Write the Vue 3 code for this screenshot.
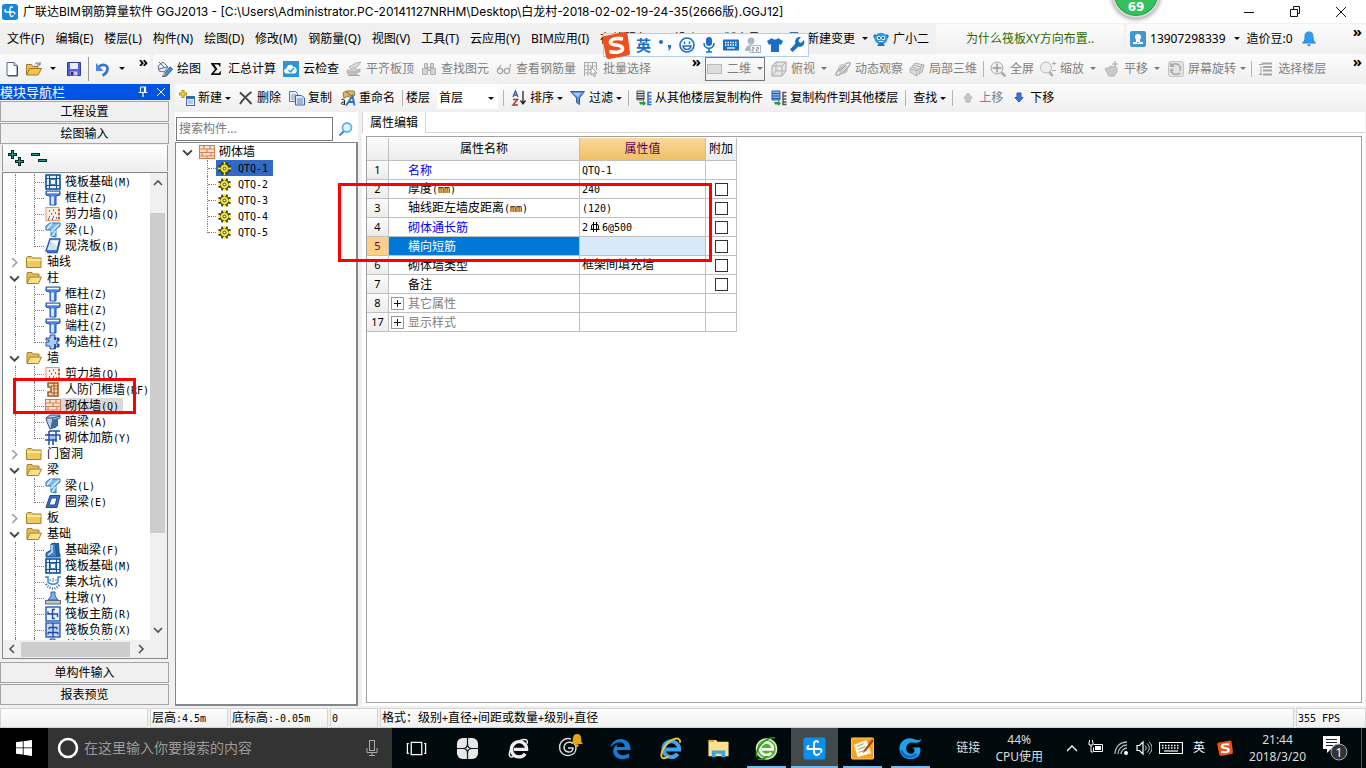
<script setup>
import { h, ref } from 'vue'

// Splits a label so that its Latin part is set in the monospaced face.
const Txt = (p) =>
  h('span', { class: 'txt' }, p.s.split(/([ -~]+)/).filter(Boolean)
    .map((x) => (/^[ -~]/.test(x) ? h('span', { class: 'mono' }, x) : x)))
Txt.props = ['s']

const icons = {
  page: '<path d="M3 1.500h7l3 3v10H3z" fill="#fff" stroke="#5a6a86"/><path d="M10 1.500v3h3" fill="#cfdcf2" stroke="#5a6a86"/><path d="M13.500 5v10H4" fill="none" stroke="#2d466e"/>',
  open: '<path d="M0.500 14V3.500h5l1.500 2h5v3" fill="#e9c14f" stroke="#9a7a2a"/><path d="M0.500 14l3.500-6.500h11.500L12 14z" fill="#f8c24f" stroke="#9a7a2a"/><path d="M9 3.500c1-2 3-2 4.500-.5M14 1v3h-3" fill="none" stroke="#4a6aa8"/>',
  save: '<path d="M1.500 1.500h13v13h-13z" fill="#5560d8" stroke="#343a9a"/><path d="M4 2h8v6H4z" fill="#e8ecfa"/><path d="M4.500 10.500h7v4h-7z" fill="#c9cbe8"/><path d="M5 11h2.500v3.500H5z" fill="#2b2f80"/>',
  undo: '<path d="M4 5.500c4-3 9-1.500 8.500 2.500-.3 3-2 5-5 6.500" fill="none" stroke="#3b6fd0" stroke-width="2.600"/><path d="M1 2v8h7.500z" fill="#4c86e6"/>',
  draw: '<path d="M1 5l5-4 5 5-4 5-5-1z" fill="#eef3fb" stroke="#5a6f96"/><path d="M2 1l6 6M2 8l8-2" stroke="#4f6790" fill="none"/><path d="M7 13l6-7 2.500 2-6 7-4 .5z" fill="#4f8fd8" stroke="#29508c"/><path d="M7 12l2 2-4 1z" fill="#e6b54a"/>',
  sigma: '<path d="M3 2h9.500v3.500h-1.200C11 4 10.500 3.500 9 3.500H6.200L9.500 8l-3.800 4.300h3.800c1.500 0 2.200-.5 2.700-2h1L12.500 14H3v-1l4-4.800L3 3z" fill="#111"/>',
  cloud: '<rect width="16" height="16" fill="#2a95dc"/><path d="M4 12.500c-4 0-3.500-5-.5-5C4 3 9 2.500 10.500 6c4-.5 4.500 6.500.5 6.500z" fill="#fff"/><path d="M5.500 9l2 2 3.500-4" fill="none" stroke="#2a95dc" stroke-width="1.500"/>',
  slab: '<path d="M3 6l7-4 5-1-3 4-7 3zM1 9h6l3-2v4H1z" fill="#dcdcdc" stroke="#b4b4b4"/><path d="M1 11h13V8l-3 1v5H3z" fill="#c4c4c4" stroke="#b0b0b0"/><path d="M2 14.500h12" stroke="#aaa"/>',
  binoc: '<path d="M3.500 2.500h3v4h-3zM9.500 2.500h3v4h-3zM1.500 7.500h5v6h-5zM9.500 7.500h5v6h-5zM6.500 6.500h3v3h-3z" fill="#d4d4d4" stroke="#b0b0b0"/>',
  glasses: '<circle cx="4" cy="10" r="2.600" fill="none" stroke="#a5a5a5" stroke-width="1.300"/><circle cx="11" cy="10" r="2.600" fill="none" stroke="#a5a5a5" stroke-width="1.300"/><path d="M1.500 9L5 4M6.500 10h2M13.500 9l1-6" stroke="#a5a5a5" stroke-width="1.200" fill="none"/>',
  batch: '<path d="M1 1.500h13M1 5h13M1 8.500h7M1 12h7M1.500 1v14M5 1v14M9.500 1v6M13.500 1v8" stroke="#aaa" fill="none"/><path d="M8 6l6 6-3 0 1.500 3-1.500.500-1.200-3L8 14z" fill="#fff" stroke="#999"/>',
  flat: '<rect x=".5" y="3.500" width="14" height="9" fill="#ddd" stroke="#bababa"/>',
  cube: '<path d="M1 5l4-4h10v9l-4 5H1z" fill="#e6e6e6" stroke="#a6a6a6"/><path d="M1 5h10v10M11 5l4-4M5 1v9h10M5 10l-4 5" fill="none" stroke="#b0b0b0"/>',
  orbit: '<circle cx="8" cy="8" r="5" fill="#c4c4c4"/><path d="M1 14c-1-3 11-14 14-12 1 3-11 14-14 12z" fill="none" stroke="#a8a8a8" stroke-width="1.400"/><path d="M4 7l6-4M6 12l6-6" stroke="#eee"/>',
  local3d: '<path d="M1 8l5-6 9 2-2 7-6 4-6-4z" fill="#dedede" stroke="#b0b0b0"/><path d="M1 8l7 2 6-6M8 10l-1 5M5 4l7 2-2 7M3 6l7 3" fill="none" stroke="#b2b2b2"/>',
  full: '<circle cx="7" cy="7" r="6" fill="#eee" stroke="#a8a8a8"/><path d="M7 2.500v9M2.500 7h9" stroke="#9a9a9a" stroke-width="1.500"/><path d="M11.500 11.500l4 4" stroke="#aaa" stroke-width="2.500"/>',
  zoom: '<circle cx="6" cy="6.500" r="5.500" fill="#eee" stroke="#b5b5b5"/><path d="M9.500 11l3 4" stroke="#aaa" stroke-width="2.500"/><path d="M12 2.500h4M14 .5v4M12 9.500h4" stroke="#aaa"/>',
  pan: '<path d="M1 8c1-2 3-1 4 0V6l2-1 2 1 2-1 2 2v4l-3 4H5z" fill="#cacaca" stroke="#b6b6b6"/><path d="M11 0v6M8 3h6" stroke="#a2a2a2"/>',
  rotate: '<rect x=".5" y=".5" width="15" height="15" rx="2" fill="#e3e3e3" stroke="#c4c4c4"/><path d="M4 4c5-3 10 1 8 6M12 12c-4 3-9 1-9-3" fill="none" stroke="#aaa" stroke-width="1.600"/><path d="M2 1v5h5zM1 10h5l-2-3z" fill="#aaa"/>',
  floors: '<path d="M5 2.500h9M5 6h9M5 9.500h9M5 13.500h9" stroke="#a3a3a3" stroke-width="1.800"/><path d="M1 3.500h4L3.500 1M3 5v9M1 13.500h3" stroke="#a3a3a3" fill="none"/>',
  create: '<path d="M4 0v8M0 4h8" stroke="#b49300" stroke-width="3"/><path d="M4 1v6M1 4h6" stroke="#ffe45c"/><rect x="7.500" y="6.500" width="8" height="9" fill="#eef4ff" stroke="#3b68b8"/><path d="M8 8h7" stroke="#3b68b8" stroke-width="2"/><path d="M9 11h5M9 13h5" stroke="#7d9fd8"/>',
  del: '<path d="M2 2.500C6 6 10 10 13.500 14M13.500 2C9 5 5 9.500 2 14" fill="none" stroke="#444" stroke-width="1.900"/>',
  copy: '<path d="M.5 1.500h6l2 2v8h-8z" fill="#e9f0fc" stroke="#5075b8"/><path d="M2 5h5M2 7h5M2 9h5" stroke="#7898cc"/><path d="M6.500 5.500h6l3 2.500v7h-9z" fill="#dfe9fa" stroke="#3b60a8"/><path d="M8 9h6M8 11h6M8 13h6" stroke="#5a7fc4"/>',
  rename: '<path d="M3 3l3-2h8l1 4-4 3-3-2-4 2z" fill="#d9bd63" stroke="#8f7630"/><path d="M6 2l6 4" stroke="#b43"/><path d="M1.500 9.500c2-1 3 0 3 1.500v4M4.500 12c-4-.5-4.500 3.500 0 2" fill="none" stroke="#222"/><path d="M6 15.500L12.500 6l2 9.500M8.500 12h5" fill="none" stroke="#2f6fd0" stroke-width="1.900"/>',
  sort: '<path d="M2 7l2.500-6L7 7M3 5h3" fill="none" stroke="#3a56a8" stroke-width="1.300"/><path d="M2 9.500h4.500L2 15h5" fill="none" stroke="#a33b3b" stroke-width="1.500"/><path d="M12 1v12M9.500 10.500L12 14l2.500-3.500" stroke="#222" fill="none" stroke-width="1.300"/>',
  filter: '<path d="M.5 1.500h14L9.500 8v6.500l-3-2V8z" fill="#5d92e2" stroke="#2f5db0"/><path d="M3 3h8L8 7z" fill="#a9caf6"/>',
  fromfloor: '<path d="M1 1h7v9H1z" fill="#ddd" stroke="#555"/><path d="M1 3.500h7M1 6h7M1 8.500h7" stroke="#333"/><path d="M3 12h4v-2l3 3.500L7 16v-1.500H4z" fill="#2a9b3c"/><path d="M15.500 2.500H12v12h3.500M12 6h3.500M12 9h3.500M12 12h3.500" stroke="#2f6fc8" stroke-width="1.500" fill="none"/>',
  tofloor: '<path d="M1 1h8v9H1z" fill="#8db5ec" stroke="#2c5cae"/><path d="M1 3.500h8M1 6h8M1 8.500h8" stroke="#2354a8"/><path d="M3 12h4v-2l3 3.500L7 16v-1.500H4z" fill="#2a9b3c"/><path d="M15.500 2.500H12v12h3.500M12 6h3.500M12 9h3.500M12 12h3.500" stroke="#555" stroke-width="1.500" fill="none"/>',
  up: '<path d="M8 3l4 5h-2v4H6V8H4z" fill="#c8c8c8" stroke="#b0b0b0"/>',
  down: '<path d="M8 12L4 7.500h2V3h4v4.500h2z" fill="#3f74de" stroke="#2450b4"/>',
  doc: '<path d="M2 1.500h8l3 3v10H2z" fill="#fff" stroke="#3178b8"/><path d="M9 2v4h4" fill="none" stroke="#3178b8"/>',
  robot: '<path d="M0 5l2-2 2 2-2 3zM16 5l-2-2-2 2 2 3z" fill="#1d74c0"/><ellipse cx="8" cy="7.500" rx="6.500" ry="5.800" fill="#2f9ae8"/><path d="M4 15l2-3h4l2 3z" fill="#1d74c0"/><circle cx="5.800" cy="7" r="2" fill="#fff"/><circle cx="10.200" cy="7" r="2" fill="#fff"/><circle cx="6" cy="7" r="1" fill="#135"/><circle cx="10" cy="7" r="1" fill="#135"/><path d="M6 10.500h4" stroke="#fff"/>',
  user: '<rect width="16" height="16" rx="2" fill="#4298cc"/><circle cx="8" cy="6" r="3" fill="#fff"/><path d="M3 13v-2h10v2z" fill="#fff"/><path d="M6 8h4v3H6z" fill="#fff"/><path d="M7 11.500h2" stroke="#4298cc"/>',
  bell: '<path d="M8 1c4 0 4 3 4 6 0 3 1 3.500 2.500 5h-13C3 10.500 4 10 4 7c0-3 0-6 4-6z" fill="#2f9bf5" stroke="#1f86e0"/><path d="M6 13.500h4L8 15.500z" fill="#1570c4"/>',
  // tree icons
  raft: '<rect x="1" y="1" width="14" height="14" fill="#e8f2fd" stroke="#174f96" stroke-width="1.600"/><path d="M4.500 1v14M11.500 1v14M1 4.500h14M1 11.500h14" stroke="#174f96"/><rect x="5.500" y="5.500" width="5" height="5" fill="#fff" stroke="#3d7fc8"/>',
  column: '<path d="M1 1h14v4l-4 1v9H5V6L1 5z" fill="#4c86e4" stroke="#2550a8"/><path d="M2 2.500h12" stroke="#fff" stroke-width="1.500"/><path d="M7.500 6.500v8" stroke="#d6e6ff" stroke-width="3"/>',
  shear: '<rect x="1" y="1.500" width="13" height="13" fill="#f7eee8" stroke="#e09a72"/><path d="M4 5h1M8 4h1M6 8h1M10 7h1M4 11h1M8 11h1M11 12h1M3 13h1M7 13h1" stroke="#555" stroke-width="1.300"/><path d="M14 3v11" stroke="#c05a20" stroke-width="2" stroke-dasharray="2 2"/>',
  beam: '<path d="M1 4l4-3h10v3l-4 3v8l-5-1V8H1z" fill="#7cbcf0" stroke="#2a77c0"/><path d="M2 7l5-6M6 10l8-8M7 14l4-5" stroke="#e4f4ff" stroke-width="1.200"/>',
  castslab: '<path d="M5 1h10l-3 12H1z" fill="#cfe1f8" stroke="#2356ac" stroke-width="1.400"/><path d="M2 14.500h10L15 3" fill="none" stroke="#2356ac" stroke-width="1.400"/><path d="M6 3h7l-1 5z" fill="#fff"/>',
  ring: '<path d="M5 1.500h10l-3 12H1z" fill="#3c70c8" stroke="#1d4594"/><path d="M6.500 4H12l-2 7H4z" fill="#fff" stroke="#1d4594"/>',
  struct: '<path d="M5 1h5v3h4v3h-2v3h2v3h-4v2H5v-3H1V8h3V6H1V4h4z" fill="#a9cdf6" stroke="#1f50a0"/><path d="M10 3v3M13 4v3M10 10v5M13 10v3" stroke="#1f4a96" stroke-width="1.800"/>',
  frame: '<path d="M3 1h10v13H3v-4h3V5H3z" fill="#f7d9bb" stroke="#a85618" stroke-width="1.500"/><path d="M6 4h7M8 7h5M6 11h7M9 1v13" stroke="#a85618"/>',
  brick: '<rect x=".5" y="1.500" width="15" height="13" fill="#f9e2d2" stroke="#cc7c4e"/><path d="M1 5h14M1 8.500h14M1 12h14M5 2v3M11 2v3M8 5v3M3 8.500V12M12 8.500V12M8 12v3" stroke="#d58458" stroke-width="1.200"/>',
  hidden: '<path d="M1 4l4-3h10v3l-4 2v7l-6 2-3-7z" fill="#b9cfe6" stroke="#27507c"/><path d="M1 4h7l7-2M8 4l-2 11" fill="none" stroke="#27507c"/><path d="M7 6l6-2v8l-6 2z" fill="#3a6ba4"/>',
  rebar: '<path d="M4 1h11M4 1v14M0 5h15M11 1v11M0 10h12M8 5v10M15 5v5" stroke="#2049b4" stroke-width="1.500" fill="none"/><path d="M5 6h5v3H5z" fill="#9cc7f4"/>',
  fbeam: '<path d="M1 15v-4l5-3V2l4-1 1 8 4 3v3z" fill="#3f84c8" stroke="#174b86"/><path d="M10 1h4l1 14h-4z" fill="#1f5ea4"/><path d="M3 13l4-3V3" stroke="#c9e6ff" stroke-width="1.500" fill="none"/>',
  pit: '<path d="M0 3h3v5c2 3 8 3 10 0V3h3" fill="none" stroke="#3f84cc" stroke-width="1.500"/><path d="M1 10c4 6 10 6 14 0" fill="none" stroke="#2d66ae" stroke-width="2.500" stroke-dasharray="1 1.500"/><path d="M5 5v2M8 4v4M11 5v2" stroke="#3f84cc"/>',
  pier: '<path d="M6 2h4v4l3 4H3l3-4z" fill="#7fb0ec" stroke="#2a5ca8"/><rect x=".5" y="10.500" width="15" height="3.500" fill="#bcc7d0" stroke="#5c6c7c"/>',
  main: '<rect x="1" y="1" width="14" height="14" fill="#eaf3ff" stroke="#2558b4" stroke-width="1.400"/><path d="M10 3.500H7.500v9H10M3 5.500V8h9.500v3" stroke="#1c47a4" stroke-width="1.400" fill="none"/>',
  neg: '<rect x="1" y="1" width="14" height="14" fill="#c4dcf8" stroke="#2558b4" stroke-width="1.400"/><path d="M8 1v14M4 5.500h8M4 5.500v2M12 5.500v2M3 10.500h10M3 10.500v2M13 10.500v2" stroke="#1c47a4" stroke-width="1.300" fill="none"/>',
  folder: '<path d="M.5 13.500v-10l1-1h4l1.500 1.500h8v9.500z" fill="#f0c95c" stroke="#a3822e"/><path d="M1 6h14" stroke="#fff1bd" stroke-width="1.500"/>',
  folderopen: '<path d="M1 13V3l1-.5h4L7.500 4H13v4" fill="#e6bd4c" stroke="#a3822e"/><path d="M1 13.500L4 7h11.500l-3 6.500z" fill="#fbe08c" stroke="#a3822e"/>',
  gear: '<path d="M5.500 1.500v13M10.500 1.500v13M1.500 5.500h13M1.500 10.500h13" stroke="#333" stroke-width="2"/><circle cx="8" cy="8" r="4.500" fill="#f6ea2c" stroke="#4c4800"/><path d="M8 1v3M8 12v3M1 8h3M12 8h3" stroke="#f6ea2c" stroke-width="1.400"/><circle cx="8" cy="8" r="1.500" fill="#fff" stroke="#333"/>',
}

const menus = ['文件(F)', '编辑(E)', '楼层(L)', '构件(N)', '绘图(D)', '修改(M)', '钢筋量(Q)', '视图(V)', '工具(T)', '云应用(Y)', 'BIM应用(I)', '在线服务(S)', '帮助(H)', '版本号(B)']

const mainTools = [
  { i: 'draw', t: '绘图' }, { i: 'sigma', t: '汇总计算' }, { i: 'cloud', t: '云检查' },
  { i: 'slab', t: '平齐板顶', off: 1 }, { i: 'binoc', t: '查找图元', off: 1 },
  { i: 'glasses', t: '查看钢筋量', off: 1 }, { i: 'batch', t: '批量选择', off: 1 },
]
const viewTools = [
  { i: 'cube', t: '俯视', off: 1, arrow: 1 }, { i: 'orbit', t: '动态观察', off: 1 },
  { i: 'local3d', t: '局部三维', off: 1 }, { sep: 1 },
  { i: 'full', t: '全屏', off: 1 }, { i: 'zoom', t: '缩放', off: 1, arrow: 1 },
  { i: 'pan', t: '平移', off: 1, arrow: 1 }, { i: 'rotate', t: '屏幕旋转', off: 1, arrow: 1, tight: 1 },
  { sep: 1 }, { i: 'floors', t: '选择楼层', off: 1 },
]
const partTools = [
  { i: 'create', t: '新建', arrow: 1, tight: 1 }, { i: 'del', t: '删除' },
  { i: 'copy', t: '复制' }, { i: 'rename', t: '重命名' }, { sep: 1 },
]
const partTools2 = [
  { sep: 1 }, { i: 'sort', t: '排序', arrow: 1, tight: 1 }, { i: 'filter', t: '过滤', arrow: 1, tight: 1 },
  { sep: 1 }, { i: 'fromfloor', t: '从其他楼层复制构件' }, { i: 'tofloor', t: '复制构件到其他楼层' },
  { sep: 1 }, { t: '查找', arrow: 1, tight: 1 }, { sep: 1 },
  { i: 'up', t: '上移', off: 1 }, { i: 'down', t: '下移' },
]

const tree = [
  ['raft', '筏板基础(M)'], ['column', '框柱(Z)'], ['shear', '剪力墙(Q)'], ['beam', '梁(L)'], ['castslab', '现浇板(B)', 'last'],
  ['folder', '轴线'], ['folderopen', '柱'],
  ['column', '框柱(Z)'], ['column', '暗柱(Z)'], ['column', '端柱(Z)'], ['struct', '构造柱(Z)', 'last'],
  ['folderopen', '墙'],
  ['shear', '剪力墙(Q)'], ['frame', '人防门框墙(RF)'], ['brick', '砌体墙(Q)', 'sel'], ['hidden', '暗梁(A)'], ['rebar', '砌体加筋(Y)', 'last'],
  ['folder', '门窗洞'], ['folderopen', '梁'],
  ['beam', '梁(L)'], ['ring', '圈梁(E)', 'last'],
  ['folder', '板'], ['folderopen', '基础'],
  ['fbeam', '基础梁(F)'], ['raft', '筏板基础(M)'], ['pit', '集水坑(K)'], ['pier', '柱墩(Y)'], ['main', '筏板主筋(R)'], ['neg', '筏板负筋(X)'], ['struct', '基础板带(W)'],
].map(([icon, label, state]) => ({ icon, label, state, folder: icon.startsWith('folder') }))

const walls = ['QTQ-1', 'QTQ-2', 'QTQ-3', 'QTQ-4', 'QTQ-5']

const rows = [
  { n: 1, name: '名称', value: 'QTQ-1', blue: 1 },
  { n: 2, name: '厚度(mm)', value: '240', box: 1 },
  { n: 3, name: '轴线距左墙皮距离(mm)', value: '(120)', box: 1 },
  { n: 4, name: '砌体通长筋', steel: ['2', '6@500'], blue: 1, box: 1 },
  { n: 5, name: '横向短筋', value: '', box: 1, sel: 1 },
  { n: 6, name: '砌体墙类型', value: '框架间填充墙', box: 1 },
  { n: 7, name: '备注', value: '', box: 1 },
  { n: 8, name: '其它属性', value: '', group: 1 },
  { n: 17, name: '显示样式', value: '', group: 1 },
]
const floor = ref('首层')
</script>

<template>
  <div class="app">
    <header class="title">
      <svg class="logo" viewBox="0 0 24 24"><rect width="24" height="24" rx="4" fill="#1488dc"/><path d="M16 6c-1-3-4-2-4 1v8c0 4 3 5 5 2M5 12h13M5 12c-1-1-1-3 1-4M18 12c2 1 1 3 0 3" fill="none" stroke="#fff" stroke-width="2"/></svg>
      <h1>广联达BIM钢筋算量软件 GGJ2013 - [C:\Users\Administrator.PC-20141127NRHM\Desktop\白龙村-2018-02-02-19-24-35(2666版).GGJ12]</h1>
      <div class="ball">69</div>
      <button class="win" aria-label="最小化"><svg viewBox="0 0 12 12"><path d="M1 6.500h10" stroke="#111"/></svg></button>
      <button class="win" aria-label="还原"><svg viewBox="0 0 12 12"><path d="M1.500 3.500h7v7h-7zM4.500 3V.5h6v7H9" fill="none" stroke="#111"/></svg></button>
      <button class="win" aria-label="关闭"><svg viewBox="0 0 12 12"><path d="M1 1l10 10M11 1L1 11" stroke="#111"/></svg></button>
    </header>

    <div class="menubar">
      <nav class="menus"><button v-for="m in menus" :key="m">{{ m }}</button></nav>
      <button class="tool change"><svg viewBox="0 0 16 16" v-html="icons.doc"/>新建变更<i class="arrow"/></button>
      <button class="tool helper"><svg viewBox="0 0 16 16" v-html="icons.robot"/>广小二</button>
      <div class="strip tip"><a href="#">为什么筏板XY方向布置..</a></div>
      <div class="strip account">
        <button class="tool"><svg viewBox="0 0 16 16" v-html="icons.user"/><span>13907298339</span><i class="arrow"/></button>
        <button class="tool beans">造价豆:0<svg viewBox="0 0 16 16" v-html="icons.bell"/></button>
        <span class="more">»</span>
      </div>
      <div class="ime">
        <svg class="sogou" viewBox="0 0 28 28"><path d="M2 5L23 1q2 0 2.500 2L28 22q0 2-2 2.500L7 28q-2 0-3-2L.5 8Q0 6 2 5z" fill="#f0501c"/><path d="M21 8C15 6.500 8 8 8.500 11.500c.5 4 12 1 12 6 0 4-7 4.500-13 3" fill="none" stroke="#fff" stroke-width="3.600"/></svg>
        <b>英</b>
        <svg viewBox="0 0 16 16"><circle cx="4" cy="5" r="2" fill="#1a6fc4"/><path d="M11 8h3c.5 3-1 5-3 6 1-2 1-3 0-4z" fill="#1a6fc4"/></svg>
        <svg viewBox="0 0 16 16"><circle cx="8" cy="8" r="7" fill="none" stroke="#1a6fc4" stroke-width="1.600"/><path d="M5.500 4.500v2.500M10.500 4.500v2.500M4 9c1 4.500 7 4.500 8 0z" stroke="#1a6fc4" stroke-width="1.400" fill="none"/></svg>
        <svg viewBox="0 0 16 16"><rect x="5" y="0" width="6" height="9" rx="3" fill="#1a6fc4"/><path d="M3 6c0 7 10 7 10 0M8 11v4M5 15h6" fill="none" stroke="#1a6fc4" stroke-width="1.600"/></svg>
        <svg viewBox="0 0 16 16"><rect x="0" y="2.500" width="16" height="11" rx="1" fill="#1a6fc4"/><path d="M2 5.500h12M2 8h12" stroke="#fff" stroke-width="1.400" stroke-dasharray="1.500 1"/><path d="M4 11h8" stroke="#fff" stroke-width="1.300"/></svg>
        <svg viewBox="0 0 16 16"><circle cx="6" cy="4" r="3.400" fill="#a9b8c8"/><path d="M0 14c0-7 9-8 11-4v4z" fill="#a9b8c8"/><rect x="5" y="8.500" width="10.500" height="7" fill="#fff" stroke="#a9b8c8"/><path d="M7 10.500h2v1.500H7v2h2M11.500 10.500h2v1.500h-2v2h2" fill="none" stroke="#8b9cae"/></svg>
        <svg viewBox="0 0 16 16"><path d="M5 1c1 2 5 2 6 0l5 3-2 4-2-1v8H4V7L2 8 0 4z" fill="#1a6fc4"/></svg>
        <svg viewBox="0 0 16 16"><path d="M15 3l-3 3-2-1-.5-2L12 0C8-1 5 3 6.500 6.500L1 12.500 3.500 15l6-5.500C13 11 16.500 7 15 3z" fill="#1a6fc4"/></svg>
      </div>
    </div>

    <div class="toolrow">
      <div class="strip files">
        <button class="tool" aria-label="新建"><svg viewBox="0 0 16 16" v-html="icons.page"/></button>
        <button class="tool" aria-label="打开"><svg viewBox="0 0 16 16" v-html="icons.open"/><i class="arrow"/></button>
        <button class="tool" aria-label="保存"><svg viewBox="0 0 16 16" v-html="icons.save"/></button>
        <i class="sep dark"/>
        <button class="tool" aria-label="撤销"><svg viewBox="0 0 16 16" v-html="icons.undo"/><i class="arrow"/></button>
        <span class="more">»</span>
      </div>
      <div class="strip draws">
        <button v-for="b in mainTools" :key="b.t" class="tool" :class="{ off: b.off }"><svg viewBox="0 0 16 16" v-html="icons[b.i]"/>{{ b.t }}</button>
        <span class="more">»</span>
      </div>
      <div class="strip views">
        <button class="tool off combo"><svg viewBox="0 0 16 16" v-html="icons.flat"/>二维<i class="arrow"/></button>
        <template v-for="(b, k) in viewTools" :key="k">
          <i v-if="b.sep" class="sep"/>
          <button v-else class="tool" :class="{ off: b.off, tight: b.tight }"><svg viewBox="0 0 16 16" v-html="icons[b.i]"/>{{ b.t }}<i v-if="b.arrow" class="arrow"/></button>
        </template>
        <span class="more">»</span>
      </div>
    </div>

    <main class="body">
      <aside class="nav">
        <div class="navhead"><span>模块导航栏</span>
          <svg viewBox="0 0 12 12"><path d="M3.500 1h5v5.500M3.500 1v5.500M7.500 1v5.500M1.500 6.500h9M6 7v4" stroke="#fff" fill="none" stroke-width="1.200"/></svg>
          <svg viewBox="0 0 12 12"><path d="M2 2l8 8M10 2l-8 8" stroke="#fff"/></svg>
        </div>
        <button class="acc">工程设置</button>
        <button class="acc">绘图输入</button>
        <div class="expand">
          <svg viewBox="0 0 16 16"><path d="M0 4.500h9M4.500 0v9M7 11.500h9M11.500 7v9" stroke="#032a20" stroke-width="3"/><path d="M1 4.500h7M4.500 1v7M8 11.500h7M11.500 8v7" stroke="#1d9a90"/></svg>
          <svg viewBox="0 0 16 16"><path d="M0 4.500h9M7 10.500h9" stroke="#032a20" stroke-width="3"/><path d="M1 4.500h7M8 10.500h7" stroke="#1d9a90"/></svg>
        </div>
        <div class="treebox">
          <div class="treemain">
            <ul class="tree">
              <li v-for="(r, k) in tree" :key="k" :class="[r.state, { leaf: !r.folder }]">
                <span v-if="r.folder" class="rail">
                  <svg v-if="r.icon === 'folderopen'" viewBox="0 0 10 10"><path d="M1 3l4 4 4-4" fill="none" stroke="#404040" stroke-width="1.700"/></svg>
                  <svg v-else viewBox="0 0 10 10"><path d="M3 1l4 4-4 4" fill="none" stroke="#a0a0a0" stroke-width="1.500"/></svg>
                </span>
                <template v-else><span class="rail line"/><span class="branch"/></template>
                <svg class="ico" viewBox="0 0 16 16" v-html="icons[r.icon]"/><Txt class="label" :s="r.label"/>
              </li>
            </ul>
            <div class="vbar">
              <svg viewBox="0 0 10 10"><path d="M1 7l4-4 4 4" fill="none" stroke="#505050" stroke-width="1.600"/></svg>
              <span class="thumb"/>
              <svg viewBox="0 0 10 10"><path d="M1 3l4 4 4-4" fill="none" stroke="#505050" stroke-width="1.600"/></svg>
            </div>
          </div>
          <div class="hbar">
            <svg viewBox="0 0 10 10"><path d="M7 1L3 5l4 4" fill="none" stroke="#505050" stroke-width="1.600"/></svg>
            <span class="thumb"/>
            <svg viewBox="0 0 10 10"><path d="M3 1l4 4-4 4" fill="none" stroke="#505050" stroke-width="1.600"/></svg>
          </div>
        </div>
        <button class="acc">单构件输入</button>
        <button class="acc">报表预览</button>
        <div class="mark m1"/>
      </aside>

      <section class="work">
        <div class="strip parts">
          <template v-for="(b, k) in partTools" :key="k">
            <i v-if="b.sep" class="sep"/>
            <button v-else class="tool" :class="{ tight: b.tight }"><svg viewBox="0 0 16 16" v-html="icons[b.i]"/>{{ b.t }}<i v-if="b.arrow" class="arrow"/></button>
          </template>
          <label for="floor">楼层</label>
          <span class="selwrap"><select id="floor" v-model="floor"><option>首层</option></select><i class="arrow"/></span>
          <template v-for="(b, k) in partTools2" :key="'b' + k">
            <i v-if="b.sep" class="sep"/>
            <button v-else class="tool" :class="{ off: b.off, tight: b.tight }"><svg v-if="b.i" viewBox="0 0 16 16" v-html="icons[b.i]"/>{{ b.t }}<i v-if="b.arrow" class="arrow"/></button>
          </template>
        </div>

        <div class="panes">
          <div class="list">
            <div class="search">
              <input type="text" placeholder="搜索构件..." aria-label="搜索构件">
              <button aria-label="搜索"><svg viewBox="0 0 16 16"><path d="M1.500 14.500L6 10" stroke="#4a86c8" stroke-width="2.200"/><circle cx="9" cy="6.500" r="4.500" fill="#e4f5ff" stroke="#5cb4ec" stroke-width="1.800"/></svg></button>
            </div>
            <ul class="walls">
              <li><span class="chev"><svg viewBox="0 0 10 10"><path d="M1 3l4 4 4-4" fill="none" stroke="#404040" stroke-width="1.700"/></svg></span><svg class="ico" viewBox="0 0 16 16" v-html="icons.brick"/><span class="wl">砌体墙</span></li>
              <li v-for="(w, k) in walls" :key="w" class="wall" :class="{ on: k === 0, last: k === 4 }">
                <span class="branch"/><span class="pick"><svg class="ico" viewBox="0 0 16 16" v-html="icons.gear"/><Txt :s="w"/></span>
              </li>
            </ul>
          </div>

          <div class="props">
            <div class="tabs"><button class="tab">属性编辑</button></div>
            <div class="sheet">
              <table>
                <colgroup><col class="c0"><col class="c1"><col class="c2"><col class="c3"></colgroup>
                <thead><tr><th/><th>属性名称</th><th class="hot">属性值</th><th>附加</th></tr></thead>
                <tbody>
                  <tr v-for="r in rows" :key="r.n" :class="{ cur: r.sel }">
                    <th>{{ r.n }}</th>
                    <td class="name" :class="{ blue: r.blue, group: r.group }"><div><button v-if="r.group" class="plus" aria-label="展开"><svg viewBox="0 0 11 11"><path d="M2 5.500h7M5.500 2v7" stroke="#111"/></svg></button><Txt :s="r.name"/></div></td>
                    <td class="val"><template v-if="r.steel"><Txt :s="r.steel[0]"/><svg class="steel" viewBox="0 0 12 12"><rect x="2.500" y="3.500" width="7" height="5" rx="1.500" fill="none" stroke="#000"/><path d="M4.500 1v10M7.500 1v10M1.500 8.500h9" stroke="#000"/></svg><Txt :s="r.steel[1]"/></template><Txt v-else :s="r.value"/></td>
                    <td class="chk"><input v-if="r.box" type="checkbox" :aria-label="r.name + '附加'"></td>
                  </tr>
                </tbody>
              </table>
            </div>
          </div>
          <div class="mark m2"/>
        </div>
      </section>
    </main>

    <footer class="status">
      <span class="s0"/><span class="s1"><Txt s="层高:4.5m"/></span><span class="s2"><Txt s="底标高:-0.05m"/></span><span class="s3"><Txt s="0"/></span><span class="s4"><Txt s="格式：级别+直径+间距或数量+级别+直径"/></span><span class="s5"><Txt s="355 FPS"/></span>
    </footer>

    <div class="taskbar">
      <button class="start" aria-label="开始"><svg viewBox="0 0 16 16"><path d="M0 2.300L6.800 1.300v6.200H0zM7.600 1.200L16 0v7.500H7.600zM0 8.300h6.800v6.300L0 13.700zM7.600 8.300H16V16l-8.400-1.200z" fill="#fff"/></svg></button>
      <div class="find">
        <svg class="cortana" viewBox="0 0 22 22"><circle cx="11" cy="11" r="9" fill="none" stroke="#fff" stroke-width="2.600"/></svg>
        <input type="text" placeholder="在这里输入你要搜索的内容" aria-label="搜索">
        <svg class="mic" viewBox="0 0 12 16"><rect x="3.500" y=".5" width="5" height="10" fill="none" stroke="#aaa"/><path d="M1 8v4.500h10V8M6 12.500v3M3 15.500h6" fill="none" stroke="#aaa"/></svg>
      </div>
      <div class="apps a1">
        <button aria-label="任务视图"><svg viewBox="0 0 24 24"><path d="M6.500 5.500h11v13h-11zM4 7H2.500v10H4M20 7h1.500v10H20" fill="none" stroke="#fff" stroke-width="1.300"/></svg></button>
        <button aria-label="四叶"><svg viewBox="0 0 24 24"><rect x="1" y="1" width="22" height="22" rx="6" fill="#e8e8e8"/><path d="M12 1v6c0 3 2 5 5 5h6M12 23v-6c0-3-2-5-5-5H1M1 12h6c3 0 5-1 5-5M23 12h-6c-3 0-5 2-5 5" fill="none" stroke="#111c1e" stroke-width="1.300"/><path d="M11 0h2l-1 3zM11 24h2l-1-3zM0 11v2l3-1zM24 11v2l-3-1z" fill="#000a0d"/></svg></button>
        <button aria-label="浏览器"><svg viewBox="0 0 24 24"><path d="M7 13h13.500A8 8 0 1 0 19 17.500" fill="none" stroke="#eee" stroke-width="3.400"/><path d="M21 7c2-8-10-4-15 3-6 8-4 14 3 9" fill="none" stroke="#eee" stroke-width="1.600"/></svg></button>
        <button aria-label="助手"><svg class="big" viewBox="0 0 28 28"><path d="M13 14h5c0 6-9 5-9-1 1-7 12-6 12 1 0 9-13 10-16 2-2-8 5-13 11-11" fill="none" stroke="#ddd" stroke-width="1.500"/><path d="M22 0c5 0 4 5 4.500 8l1.500 2H16l1.500-2c.5-3 0-8 4.500-8z" fill="#e8a512"/><circle cx="22" cy="11.500" r="1.600" fill="#e8a512"/></svg></button>
        <button aria-label="Edge"><svg viewBox="0 0 24 24"><path d="M1.500 11C4-1.500 23-1 22.500 13.500H8.500c0 6.500 9 6.500 12.500 3.500v4.500C13.500 25 4 22.500 4.500 14c.3-4 3-6 5.500-7-1.500 1-2 2-2 3.500h8.500c0-7-10-6.500-15 .5z" fill="#0f7ddc"/></svg></button>
      </div>
      <div class="apps a2">
        <button aria-label="Internet Explorer"><svg viewBox="0 0 24 24"><path d="M7 13h14A8.200 8.200 0 1 0 19.500 17.500" fill="none" stroke="#3fa2ea" stroke-width="4.200"/><path d="M22 6c1-8-11-4-16 4-6 9-4 16 4 10" fill="none" stroke="#f4c630" stroke-width="2"/></svg></button>
        <button aria-label="文件资源管理器"><svg viewBox="0 0 24 24"><path d="M1.500 3h8l1.500 2h11.500v15h-21z" fill="#fbe08e"/><path d="M2.500 4h5" stroke="#e09a28" stroke-width="2"/><path d="M5 21v-7h14v7h-4v-3.500H9V21z" fill="#35a8e0"/></svg></button>
        <button class="run" aria-label="360浏览器"><svg viewBox="0 0 24 24"><circle cx="12" cy="12.500" r="10.500" fill="#4cb62c" stroke="#d6f4c8" stroke-width="1.500"/><path d="M7 13h11.500A6.600 6.600 0 1 0 17 16.500" fill="none" stroke="#fff" stroke-width="2.800"/><path d="M2 21C-1 14 11-1 21 1M3 23c5 1 8-1 10-3" fill="none" stroke="#2f8a1c" stroke-width="1.600"/></svg></button>
        <button class="run active" aria-label="广联达"><svg viewBox="0 0 24 24"><rect x=".5" y=".5" width="23" height="23" rx="3" fill="#0d8ff0"/><path d="M16 6c-1-3-4.500-2-4.500 1v8c0 4 3.500 5 6 2M5 12.500h13M5 13c-1-2-.5-3.500 1.500-4M18 12.500c2 1 1.500 3 0 3.500" fill="none" stroke="#fff" stroke-width="2"/></svg></button>
        <button class="run" aria-label="写字板"><svg viewBox="0 0 24 24"><rect x=".5" y="1" width="23" height="22" rx="1" fill="#f6a21c" stroke="#ffd36c"/><path d="M3 8l13-5 5 14-14 4z" fill="#fff6e0"/><path d="M6 10l7-3M7 13l8-3M8 16l6-2" stroke="#999"/><path d="M22 2l-8 11-2 4 4-3 8-10z" fill="#a8481c"/></svg></button>
        <button class="run" aria-label="广联达G"><svg viewBox="0 0 24 24"><path d="M23.500 2c-2 2-5 1-8 0C6-1 0 6 .5 13c1 10 13 13 19.500 7 2-2 3-6 2-9h-8c2 1 2.500 2 2 4-1 4-8 3-8.500-2C7 7 12 5 16 6c4 0 7-1 7.500-4z" fill="#1da2ee"/><path d="M2.500 14c2 7 11 9 16 3.500" stroke="#0b62c4" stroke-width="2.500" fill="none"/></svg></button>
      </div>
      <div class="tray">
        <span class="link">链接</span>
        <span class="two cpu">44%<br>CPU使用</span>
        <svg class="t12" viewBox="0 0 12 12"><path d="M1 9l5-5 5 5" fill="none" stroke="#fff" stroke-width="1.300"/></svg>
        <svg class="t16" viewBox="0 0 16 16"><path d="M1 2v3h4V2M3 5v7h2M1.500 0v2M4.500 0v2" stroke="#fff" fill="none"/><path d="M6 4.500h8.500v7H5.500v-4" fill="none" stroke="#fff"/><path d="M7 6h6v4H7z" fill="#fff"/></svg>
        <svg class="t16 wifi" viewBox="0 0 16 16"><path d="M2 14C2 7 7 2 14 2M5 14c0-5 4-9 9-9M8 14c0-3 3-6 6-6" fill="none" stroke="#bbb" stroke-width="1.300"/><circle cx="13" cy="13" r="2" fill="#fff"/></svg>
        <svg class="t16" viewBox="0 0 16 16"><path d="M1 5.500h2.500L7 2v12l-3.500-3.500H1z" fill="none" stroke="#fff" stroke-width="1.200"/><path d="M9 5.500c1.500 1.500 1.500 3.500 0 5M11 3.500c3 3 3 6 0 9M13 2c4 4 4 8 0 12" fill="none" stroke="#ccc"/></svg>
        <svg class="t24" viewBox="0 0 24 16"><path d="M.5 2.500h23v11H.5z" fill="none" stroke="#fff" stroke-width="1.200"/><path d="M3 5.500h18M3 8h18" stroke="#fff" stroke-dasharray="1.500 1.500" stroke-width="1.300"/><path d="M5 11h14" stroke="#fff" stroke-width="1.200"/></svg>
        <span class="ying">英</span>
        <svg class="t16" viewBox="0 0 28 28"><path d="M2 5L23 1q2 0 2.500 2L28 22q0 2-2 2.500L7 28q-2 0-3-2L.5 8Q0 6 2 5z" fill="#f0501c"/><path d="M21 8C15 6.500 8 8 8.500 11.500c.5 4 12 1 12 6 0 4-7 4.500-13 3" fill="none" stroke="#fff" stroke-width="3.800"/></svg>
        <span class="two clock">21:44<br>2018/3/20</span>
        <svg class="note" viewBox="0 0 28 28"><path d="M2 2h17v13h-9l-4 4v-4H2z" fill="#fff"/><path d="M5 5.500h11M5 8.500h11M5 11.500h7" stroke="#222"/><circle cx="18" cy="18" r="8" fill="#333" stroke="#aaa"/><text x="18" y="22.500" text-anchor="middle" font-size="13" font-family="Open Sans, sans-serif" fill="#fff">1</text></svg>
      </div>
    </div>
  </div>
</template>

<style>
html, body { margin: 0; background: #f0f0f0; }
.txt .mono { font-family: "DejaVu Sans Mono", monospace; font-size: 10px; }
</style>

<style scoped>
.app { height: 100vh; min-height: 720px; display: flex; flex-direction: column; overflow: hidden; background: #f0f0f0; color: #000; font: 12px/16px "Noto Sans", "Noto Sans CJK SC", sans-serif; white-space: nowrap; }
.app * { box-sizing: border-box; }
button, input, select { font: inherit; color: inherit; border: 0; padding: 0; margin: 0; background: none; border-radius: 0; }
svg { flex: none; display: block; }
ul { list-style: none; margin: 0; padding: 0; }
a { color: inherit; text-decoration: none; }

.title { position: relative; flex: none; display: flex; align-items: center; height: 23px; padding: 0 12px 0 2px; background: #fff; }
.logo { width: 16px; height: 16px; }
h1 { margin: 0 auto 0 5px; font: 400 12px/16px Inter, "Noto Sans CJK SC", sans-serif; }
.win { width: 46px; display: flex; justify-content: center; }
.win svg { width: 12px; height: 12px; }
.win:last-child { margin-right: -10px; }
.ball { position: absolute; right: 206px; top: -30px; z-index: 3; width: 48px; height: 48px; border-radius: 50%; background: #35c05c; border: 2px solid #d8d8d8; box-shadow: inset 0 0 0 1px #1f9a46, 0 1px 5px #888; color: #fff; font: bold 12px/16px "DejaVu Sans", sans-serif; text-align: center; padding-top: 27px; }

.menubar { position: relative; flex: none; display: flex; align-items: center; height: 31px; }
.menus { display: flex; gap: 11px; padding-left: 7px; width: 788px; overflow: hidden; }
.tool { display: flex; align-items: center; gap: 4px; flex: none; }
.tool svg { width: 16px; height: 16px; }
.tool .arrow { margin: 0 2px; }
.tool.tight .arrow { margin: 0 -1px 0 0; }
.change { gap: 3px; }
.files .tool .arrow, .account .arrow, .change .arrow { margin: 0 4px; }
.arrow { flex: none; width: 0; height: 0; border: 3px solid transparent; border-top-color: #111; border-bottom: 0; }
.off { color: #808080; }
.off .arrow { border-top-color: #777; }
.helper { margin: 0 7px 0 1px; }
.strip { display: flex; align-items: center; height: 29px; border-radius: 3px; background: linear-gradient(#fcfcfc, #efefef); }
.tip { width: 188px; justify-content: center; color: #2f6a00; margin-right: 2px; }
.account { flex: 1; padding: 0 4px; }
.beans { margin-left: 3px; gap: 8px; }
.more { margin-left: auto; align-self: flex-start; font: bold 15px/14px "Open Sans", sans-serif; }
.ime { position: absolute; left: 603px; top: 10px; z-index: 2; display: flex; align-items: center; gap: 6px; height: 24px; padding-right: 3px; border: 1px solid #b8cfe8; background: #fafcff; }
.ime svg { width: 16px; height: 16px; }
.ime .sogou { width: 28px; height: 28px; margin-left: -2px; }
.ime b { color: #1a6fc4; font-size: 15px; }

.toolrow { flex: none; display: flex; gap: 3px; height: 30px; }
.files { width: 150px; padding-left: 4px; gap: 6px; }
.files .more { margin-right: 2px; }
.draws { width: 548px; padding-left: 4px; gap: 7px; }
.views { flex: 1; padding: 0 4px 0 1px; gap: 6px; }
.combo { height: 24px; padding: 0 1px; border: 1px solid #777; }
.combo .arrow { margin: 0 0 0 2px; }
.sep { flex: none; width: 1px; height: 16px; background: #b4b4b4; }
.dark { height: 24px; background: #999; }

.body { flex: 1; min-height: 0; display: flex; gap: 5px; }
.nav { position: relative; flex: none; width: 170px; display: flex; flex-direction: column; gap: 1px; padding-bottom: 3px; }
.navhead { flex: none; display: flex; align-items: center; gap: 6px; height: 16px; padding-right: 3px; background: #0054e3; color: #fff; font-size: 13px; }
.navhead span { margin-right: auto; }
.navhead svg { width: 12px; height: 12px; }
.acc { flex: none; height: 21px; margin-right: 1px; border: 1px solid #a4a4a4; background: #f0f0f0; text-align: center; }
.expand { flex: none; display: flex; align-items: center; gap: 7px; height: 26px; margin: 0 2px; padding-left: 5px; border-left: 1px solid #999; border-right: 1px solid #999; background: linear-gradient(#fff, #eee); }
.expand svg { width: 16px; height: 16px; }
.treebox { flex: 1; min-height: 0; display: flex; flex-direction: column; margin: 0 2px 2px; border: 1px solid #828790; background: #fff; }
.treemain { flex: 1; min-height: 0; display: flex; }
.tree { flex: 1; min-width: 0; overflow: hidden; padding: 1px 0 0 1px; }
.tree li, .walls li { display: flex; align-items: center; height: 16px; }
.ico { width: 16px; height: 16px; }
.rail { position: relative; flex: none; align-self: stretch; width: 22px; display: flex; align-items: center; padding-left: 5px; }
.rail svg { width: 11px; height: 11px; }
.line::before, .branch::before { content: ""; position: absolute; left: 11px; top: 0; bottom: 0; border-left: 1px dotted #808080; }
.branch { position: relative; flex: none; align-self: stretch; width: 19px; }
.branch::before { left: 8px; }
.branch::after { content: ""; position: absolute; left: 9px; right: 1px; top: 8px; border-top: 1px dotted #808080; }
.last .branch::before { bottom: 7px; }
.label { padding-left: 5px; }
.leaf .label { padding: 0 4px; }
.sel .label { background: #d9d9d9; }
.vbar { flex: none; width: 17px; display: flex; flex-direction: column; align-items: center; background: #f0f0f0; padding: 5px 2px 5px 0; }
.vbar svg, .hbar svg { width: 10px; height: 10px; }
.thumb { background: #cdcdcd; }
.vbar .thumb { width: 15px; height: 70%; margin: 25px 0 auto; }
.hbar { flex: none; display: flex; align-items: center; height: 18px; padding: 0 21px 0 4px; background: #f0f0f0; }
.hbar .thumb { height: 15px; width: 109px; margin: 0 auto 0 4px; }

.work { flex: 1; min-width: 0; display: flex; flex-direction: column; }
.parts { flex: none; height: 28px; padding-left: 4px; gap: 8px; }
.parts .tool { gap: 3px; }
.parts .sep { margin: 0 -1px; }
.parts .sep + label { margin-left: -4px; }
.selwrap { position: relative; display: flex; align-items: center; margin: 0 -2px 0 -1px; }
select { appearance: none; width: 61px; height: 22px; padding-left: 2px; background: #fff; }
.selwrap .arrow { position: absolute; right: 4px; pointer-events: none; }
.panes { position: relative; flex: 1; min-height: 0; display: flex; gap: 4px; padding: 0 1px 2px 0; }
.list { flex: none; width: 183px; display: flex; flex-direction: column; background: #fff; padding-top: 4px; }
.search { display: flex; align-items: center; height: 26px; padding-left: 1px; }
.search input { flex: 1; min-width: 0; height: 24px; border: 1px solid #7a7a7a; padding: 0 2px 2px; background: #fff; }
.search input::placeholder { color: #777; opacity: 1; }
.search button { width: 25px; display: flex; justify-content: center; }
.search svg { width: 16px; height: 16px; }
.walls { flex: 1; border: 1px solid #828790; border-width: 1px 2px 2px 1px; padding: 1px 0 0 1px; }
.chev { width: 22px; padding-left: 5px; }
.chev svg { width: 11px; height: 11px; }
.wl { padding-left: 4px; }
.wall .branch { width: 39px; }
.wall .branch::before { left: 30px; }
.wall .branch::after { left: 31px; right: 0; }
.pick { display: flex; align-items: center; gap: 6px; height: 16px; padding: 0 5px 0 1px; }
.pick .ico { width: 15px; height: 15px; }
.on .pick { background: #316ac5; }

.props { flex: 1; min-width: 0; display: flex; flex-direction: column; background: #fff; }
.tabs { flex: none; display: flex; height: 21px; }
.tabs::after { content: ""; flex: 1; border-bottom: 1px solid #d4d4d4; border-left: 1px solid #d4d4d4; }
.tab { padding: 0 7px; border-left: 1px solid #d4d4d4; }
.sheet { flex: 1; margin: 3px 3px 3px 4px; border: 1px solid #a0a0a0; padding-top: 1px; }
table { table-layout: fixed; width: 370px; border-collapse: separate; border-spacing: 0; }
.c0 { width: 22px; } .c1 { width: 191px; } .c2 { width: 126px; } .c3 { width: 31px; }
th, td { height: 19px; padding: 0; border-right: 1px solid #c0c0c0; border-bottom: 1px solid #c0c0c0; font-weight: 400; line-height: 16px; }
th { background: linear-gradient(#fbfbfb, #ececec); text-align: center; }
tbody th { font-size: 11px; }
thead th { height: 23px; }
.hot { background: linear-gradient(#fad9a0, #efbf62); color: #600050; }
.name div { display: flex; align-items: center; padding: 1px 0 0 19px; }
.name.group { color: #808080; }
.name.group div { padding-left: 2px; gap: 4px; }
.plus { width: 13px; height: 13px; border: 1px solid #999; background: #fff; }
.plus svg { width: 11px; height: 11px; }
.blue { color: #00f; }
.val { padding-left: 2px; }
.steel { display: inline-block; width: 12px; height: 12px; margin: 0 1px; vertical-align: -2px; }
.cur th { background: #fdd08a; color: #600050; }
.cur .name { background: #0078d7; color: #fff; }
.cur .val { background: #d8eafa; }
.chk input { appearance: none; display: block; margin: 0 auto; width: 13px; height: 13px; border: 1px solid #333; background: #fff; }
.mark { position: absolute; border: 3px solid #f00; pointer-events: none; }
.m1 { left: 13px; top: 294px; width: 123px; height: 36px; }
.m2 { left: 163px; top: 71px; width: 374px; height: 79px; }

.status { flex: none; display: flex; gap: 2px; height: 20px; }
.status > span { border: 1px solid #d4d4d4; padding-left: 1px; background: linear-gradient(#fdfdfd, #f0f0f0); line-height: 18px; }
.s0 { width: 148px; } .s1 { width: 78px; } .s2 { width: 98px; } .s3 { width: 48px; } .s4 { flex: 1; } .s5 { width: 70px; }

.taskbar { flex: none; display: flex; height: 40px; background: #000a0d; color: #ddd; }
.start { flex: none; width: 48px; display: flex; align-items: center; justify-content: center; background: #000; }
.start svg { width: 16px; height: 16px; }
.find { flex: none; display: flex; align-items: center; width: 344px; padding: 0 14px 0 9px; background: #333; }
.cortana { width: 22px; height: 22px; }
.find input { flex: 1; min-width: 0; margin-left: 5px; font-size: 14px; color: #aaa; }
.find input::placeholder { color: #9a9a9a; opacity: 1; }
.mic { width: 12px; height: 16px; }
.apps { flex: none; display: flex; }
.apps button { position: relative; display: flex; align-items: center; justify-content: center; width: 48px; }
.apps svg { width: 23px; height: 23px; }
.apps .big { width: 28px; height: 28px; }
.a1 { gap: 3px; }
.a2 { gap: 1px; padding-left: 3px; }
.a2 button { width: 47px; }
.run::after { content: ""; position: absolute; left: 4px; right: 4px; bottom: 0; height: 2px; background: #76b9ed; }
.active { background: #434a4c; }
.active::after { left: 0; right: 0; }
.tray { flex: 1; display: flex; align-items: center; justify-content: flex-end; gap: 7px; padding-right: 4px; }
.tray svg { height: 16px; }
.two { text-align: center; line-height: 17px; }
.cpu { margin: 0 16px 0 8px; }
.t12 { width: 12px; margin-right: 3px; } .t16 { width: 16px; } .t24 { width: 24px; }
.wifi { margin-left: 2px; }
.ying { color: #fff; padding: 0 5px 0 3px; }
.clock { margin: 0 8px 0 9px; }
.tray .note { width: 28px; height: 28px; margin-right: 5px; }
.tray::after { content: ""; width: 1px; height: 40px; background: #555; }
</style>
